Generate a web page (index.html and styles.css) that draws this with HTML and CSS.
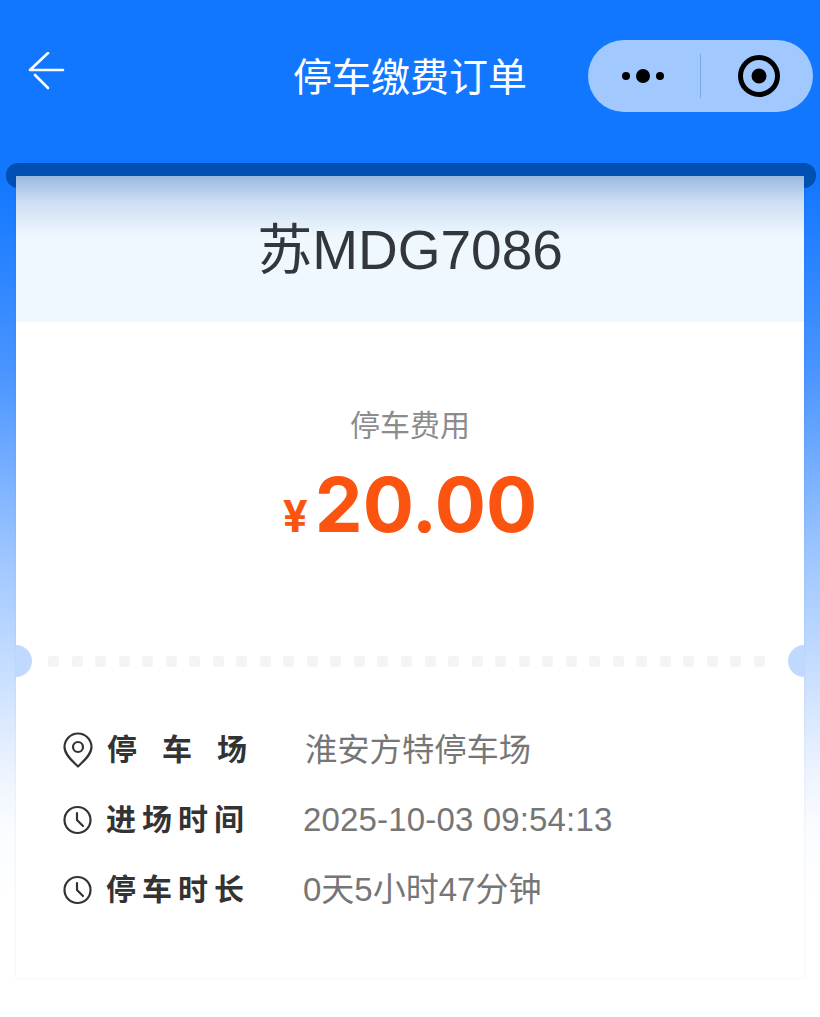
FILE: index.html
```html
<!DOCTYPE html>
<html lang="zh-CN">
<head>
    <meta charset="UTF-8">
    <meta name="viewport" content="width=device-width, initial-scale=1.0">
    <title>停车缴费订单</title>
    <link rel="stylesheet" href="styles.css">
</head>
<body>
    <header class="nav">
        <div class="nav-left">
            <svg class="back" width="38" height="38" viewBox="0 0 38 38" fill="none" stroke="#fff" stroke-width="2.6" stroke-linecap="round" stroke-linejoin="round">
                <path d="M35 18H2L20 1"/>
                <path d="M7 23L20 36"/>
            </svg>
        </div>
        <h1 class="nav-title">停车缴费订单</h1>
        <div class="capsule">
            <div class="capsule-more">
                <span class="dot"></span>
                <span class="dot dot-big"></span>
                <span class="dot"></span>
            </div>
            <div class="capsule-line"></div>
            <svg class="capsule-target" width="44" height="44" viewBox="0 0 44 44">
                <circle cx="22" cy="22" r="18.5" fill="none" stroke="#000" stroke-width="5"/>
                <circle cx="22" cy="22" r="7.5" fill="#000"/>
            </svg>
        </div>
    </header>

    <main class="ticket">
        <div class="slot"></div>
        <div class="card">
            <div class="plate">苏MDG7086</div>

            <div class="fee">
                <p class="fee-label">停车费用</p>
                <p class="fee-amount"><span class="fee-unit">¥</span>20.00</p>
            </div>

            <div class="tear">
                <span class="notch notch-left"></span>
                <div class="tear-dots" id="tear-dots"></div>
                <span class="notch notch-right"></span>
            </div>

            <ul class="info">
                <li class="info-row">
                    <svg class="info-icon" width="32" height="36" viewBox="0 0 32 36" fill="none" stroke="#333" stroke-width="2.2" stroke-linejoin="round">
                        <path d="M16 34.5C11 29.5 2.5 23 2.5 15A13.5 13.5 0 0 1 29.5 15C29.5 23 21 29.5 16 34.5Z"/>
                        <circle cx="16" cy="15" r="5"/>
                    </svg>
                    <span class="info-key key-wide"><span>停</span><span>车</span><span>场</span></span>
                    <span class="info-value value-place">淮安方特停车场</span>
                </li>
                <li class="info-row">
                    <svg class="info-icon" width="32" height="32" viewBox="0 0 32 32" fill="none" stroke="#333" stroke-width="2.2" stroke-linecap="round" stroke-linejoin="round">
                        <circle cx="15.5" cy="16" r="13"/>
                        <path d="M15 9V16L21 22"/>
                    </svg>
                    <span class="info-key">进场时间</span>
                    <span class="info-value value-time">2025-10-03 09:54:13</span>
                </li>
                <li class="info-row">
                    <svg class="info-icon" width="32" height="32" viewBox="0 0 32 32" fill="none" stroke="#333" stroke-width="2.2" stroke-linecap="round" stroke-linejoin="round">
                        <circle cx="15.5" cy="16" r="13"/>
                        <path d="M15 9V16L21 22"/>
                    </svg>
                    <span class="info-key">停车时长</span>
                    <span class="info-value">0天5小时47分钟</span>
                </li>
            </ul>
        </div>
    </main>

    <script>
        // dotted tear line across the ticket
        const tearDots = document.getElementById('tear-dots');
        for (let i = 0; i < 31; i++) {
            tearDots.appendChild(document.createElement('span'));
        }
    </script>
</body>
</html>
```

FILE: styles.css
```css
* {
    margin: 0;
    padding: 0;
    box-sizing: border-box;
}

html, body {
    height: 1017px;
    overflow: hidden;
}

body {
    font-family: "Liberation Sans", "Noto Sans CJK SC", sans-serif;
    background: linear-gradient(180deg, #1277ff 0, #1277ff 180px, #4a95ff 373px, #9cc5ff 552px, #c3dcff 660px, #eef4fe 775px, #fafcff 830px, #fff 900px);
}

.nav {
    display: grid;
    grid-template-columns: 1fr auto 1fr;
    align-items: center;
    height: 163px;
    padding: 40px 7px 51px;
}

.nav-left {
    display: flex;
    align-items: center;
    padding-left: 21px;
}

.back {
    margin-top: -10px;
}

.nav-title {
    font-size: 39px;
    font-weight: 400;
    color: #fff;
    line-height: 68px;
    padding-top: 4px;
}

.capsule {
    justify-self: end;
    display: flex;
    align-items: center;
    width: 225px;
    height: 72px;
    border-radius: 36px;
    background: #a1c9ff;
}

.capsule-more {
    display: flex;
    align-items: center;
    justify-content: center;
    gap: 6px;
    width: 112px;
    padding-right: 2px;
}

.dot {
    width: 8px;
    height: 8px;
    border-radius: 50%;
    background: #000;
}

.dot-big {
    width: 14px;
    height: 14px;
}

.capsule-line {
    width: 1px;
    height: 44px;
    background: #7ea8dc;
}

.capsule-target {
    margin-left: 36px;
}

.ticket {
    padding: 0 4px 0 6px;
}

.slot {
    height: 25px;
    border-radius: 12px;
    background: #0050b4;
}

.card {
    display: flex;
    flex-direction: column;
    height: 802px;
    margin: -12px 12px 0 10px;
    background: #fff;
    box-shadow: 0 0 3px rgba(0, 30, 90, 0.07);
    position: relative;
}

.plate {
    height: 146px;
    padding-top: 44px;
    text-align: center;
    font-size: 55px;
    line-height: 60px;
    color: #33373c;
    background: linear-gradient(180deg, rgba(0, 70, 170, 0.36) 0, rgba(0, 70, 170, 0.14) 26px, rgba(0, 70, 170, 0) 62px), #eff8ff;
}

.fee {
    height: 323px;
    padding-top: 84px;
    text-align: center;
}

.fee-label {
    font-size: 30px;
    line-height: 40px;
    color: #8c8c8c;
}

.fee-amount {
    margin-top: 8px;
    font-family: Inter, "Liberation Sans", sans-serif;
    font-size: 76px;
    line-height: 100px;
    font-weight: 700;
    color: #fb5410;
}

.fee-unit {
    font-size: 44px;
    margin-right: 7px;
}

.tear {
    display: flex;
    align-items: center;
    height: 32px;
    position: relative;
    padding: 0 39px 0 32px;
}

.tear-dots {
    display: flex;
    justify-content: space-between;
    width: 100%;
}

.tear-dots span {
    width: 11px;
    height: 11px;
    border-radius: 3px;
    background: #f4f4f4;
}

.notch {
    position: absolute;
    top: 0;
    width: 16px;
    height: 32px;
    background: #c0daff;
}

.notch-left {
    left: 0;
    border-radius: 0 16px 16px 0;
}

.notch-right {
    right: 0;
    border-radius: 16px 0 0 16px;
}

.info {
    list-style: none;
    padding: 38px 0 0 46px;
}

.info-row {
    display: flex;
    align-items: center;
    height: 70px;
    font-size: 30px;
}

.info-icon {
    flex: none;
}

.info-key {
    width: 209px;
    padding-left: 12px;
    font-weight: 700;
    letter-spacing: 6px;
    line-height: 40px;
    color: #333;
}

.key-wide {
    display: flex;
    justify-content: space-between;
    letter-spacing: 0;
    width: 211px;
    padding-left: 13px;
    padding-right: 58px;
}

.info-value {
    font-size: 33px;
    line-height: 40px;
    color: #767676;
}

.value-place {
    font-size: 32.3px;
}

.value-time {
    letter-spacing: 0.16px;
}
```
